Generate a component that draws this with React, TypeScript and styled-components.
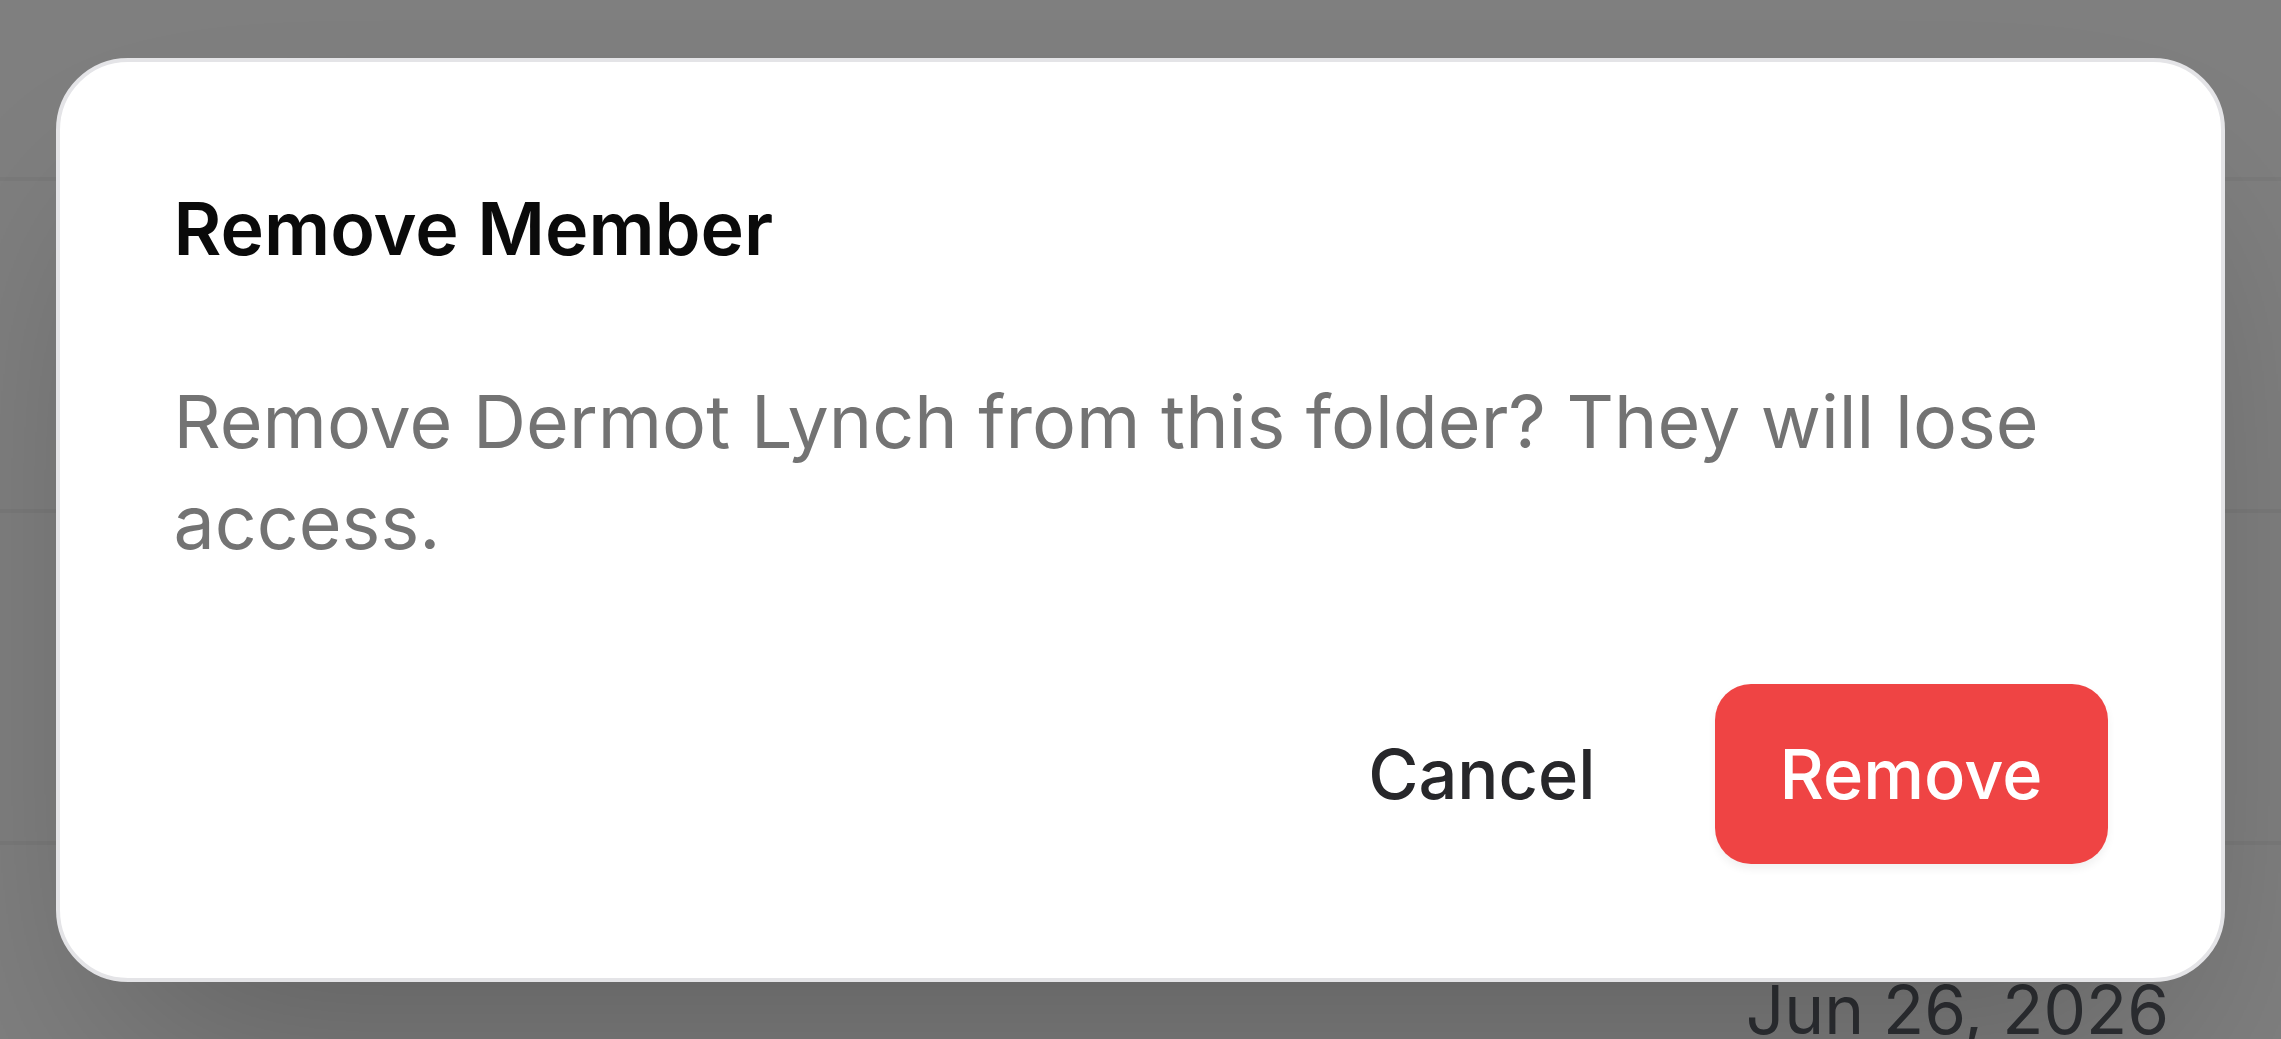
import React from "react";
import styled, { createGlobalStyle } from "styled-components";

const GlobalStyle = createGlobalStyle`
  html, body {
    margin: 0;
    padding: 0;
    background: #ffffff;
    font-family: "Inter", "Liberation Sans", sans-serif;
    overflow: hidden;
  }
  * {
    box-sizing: border-box;
  }
`;

const Page = styled.div`
  width: 2281px;
  height: 1039px;
  overflow: hidden;
  background: #ffffff;
`;

const Row = styled.div<{ $height: number }>`
  display: flex;
  align-items: center;
  justify-content: flex-end;
  height: ${(p) => p.$height}px;
  padding: 0 112px;
  border-bottom: 4.5px solid #f4f4f5;
`;

const DateCell = styled.span`
  font-size: 67.5px;
  font-weight: 400;
  color: #5c6068;
`;

const Overlay = styled.div`
  position: fixed;
  inset: 0;
  display: flex;
  align-items: center;
  justify-content: center;
  background: rgba(0, 0, 0, 0.5);
`;

const Dialog = styled.div`
  width: 2169px;
  padding: 113.5px;
  background: #ffffff;
  border: 4.5px solid #e4e4e7;
  border-radius: 72px;
  box-shadow: 0 112px 225px -54px rgba(0, 0, 0, 0.25);
`;

const Title = styled.h2`
  margin: 0;
  font-size: 73.5px;
  line-height: 108px;
  font-weight: 600;
  color: #0a0a0a;
`;

const Message = styled.p`
  margin: 88px 0 0;
  font-size: 73.5px;
  line-height: 101px;
  font-weight: 400;
  color: #737373;
`;

const Actions = styled.div`
  display: flex;
  justify-content: flex-end;
  gap: 54px;
  margin-top: 111px;
`;

const Button = styled.button<{ $variant: "ghost" | "danger" }>`
  height: 180px;
  padding: 0 65px;
  border: none;
  border-radius: 36px;
  font-family: inherit;
  font-size: 68.5px;
  font-weight: 500;
  cursor: pointer;
  background: ${(p) => (p.$variant === "danger" ? "#ef4444" : "transparent")};
  color: ${(p) => (p.$variant === "danger" ? "#ffffff" : "#27272a")};
  box-shadow: ${(p) =>
    p.$variant === "danger" ? "0 4.5px 9px rgba(0, 0, 0, 0.06)" : "none"};
`;

export default function App() {
  return (
    <>
      <GlobalStyle />
      <Page>
        <Row $height={181} />
        <Row $height={332} />
        <Row $height={332} />
        <Row $height={332}>
          <DateCell>Jun 26, 2026</DateCell>
        </Row>
      </Page>
      <Overlay>
        <Dialog role="dialog" aria-modal="true">
          <Title>Remove Member</Title>
          <Message>
            Remove Dermot Lynch from this folder? They will lose access.
          </Message>
          <Actions>
            <Button $variant="ghost">Cancel</Button>
            <Button $variant="danger">Remove</Button>
          </Actions>
        </Dialog>
      </Overlay>
    </>
  );
}
